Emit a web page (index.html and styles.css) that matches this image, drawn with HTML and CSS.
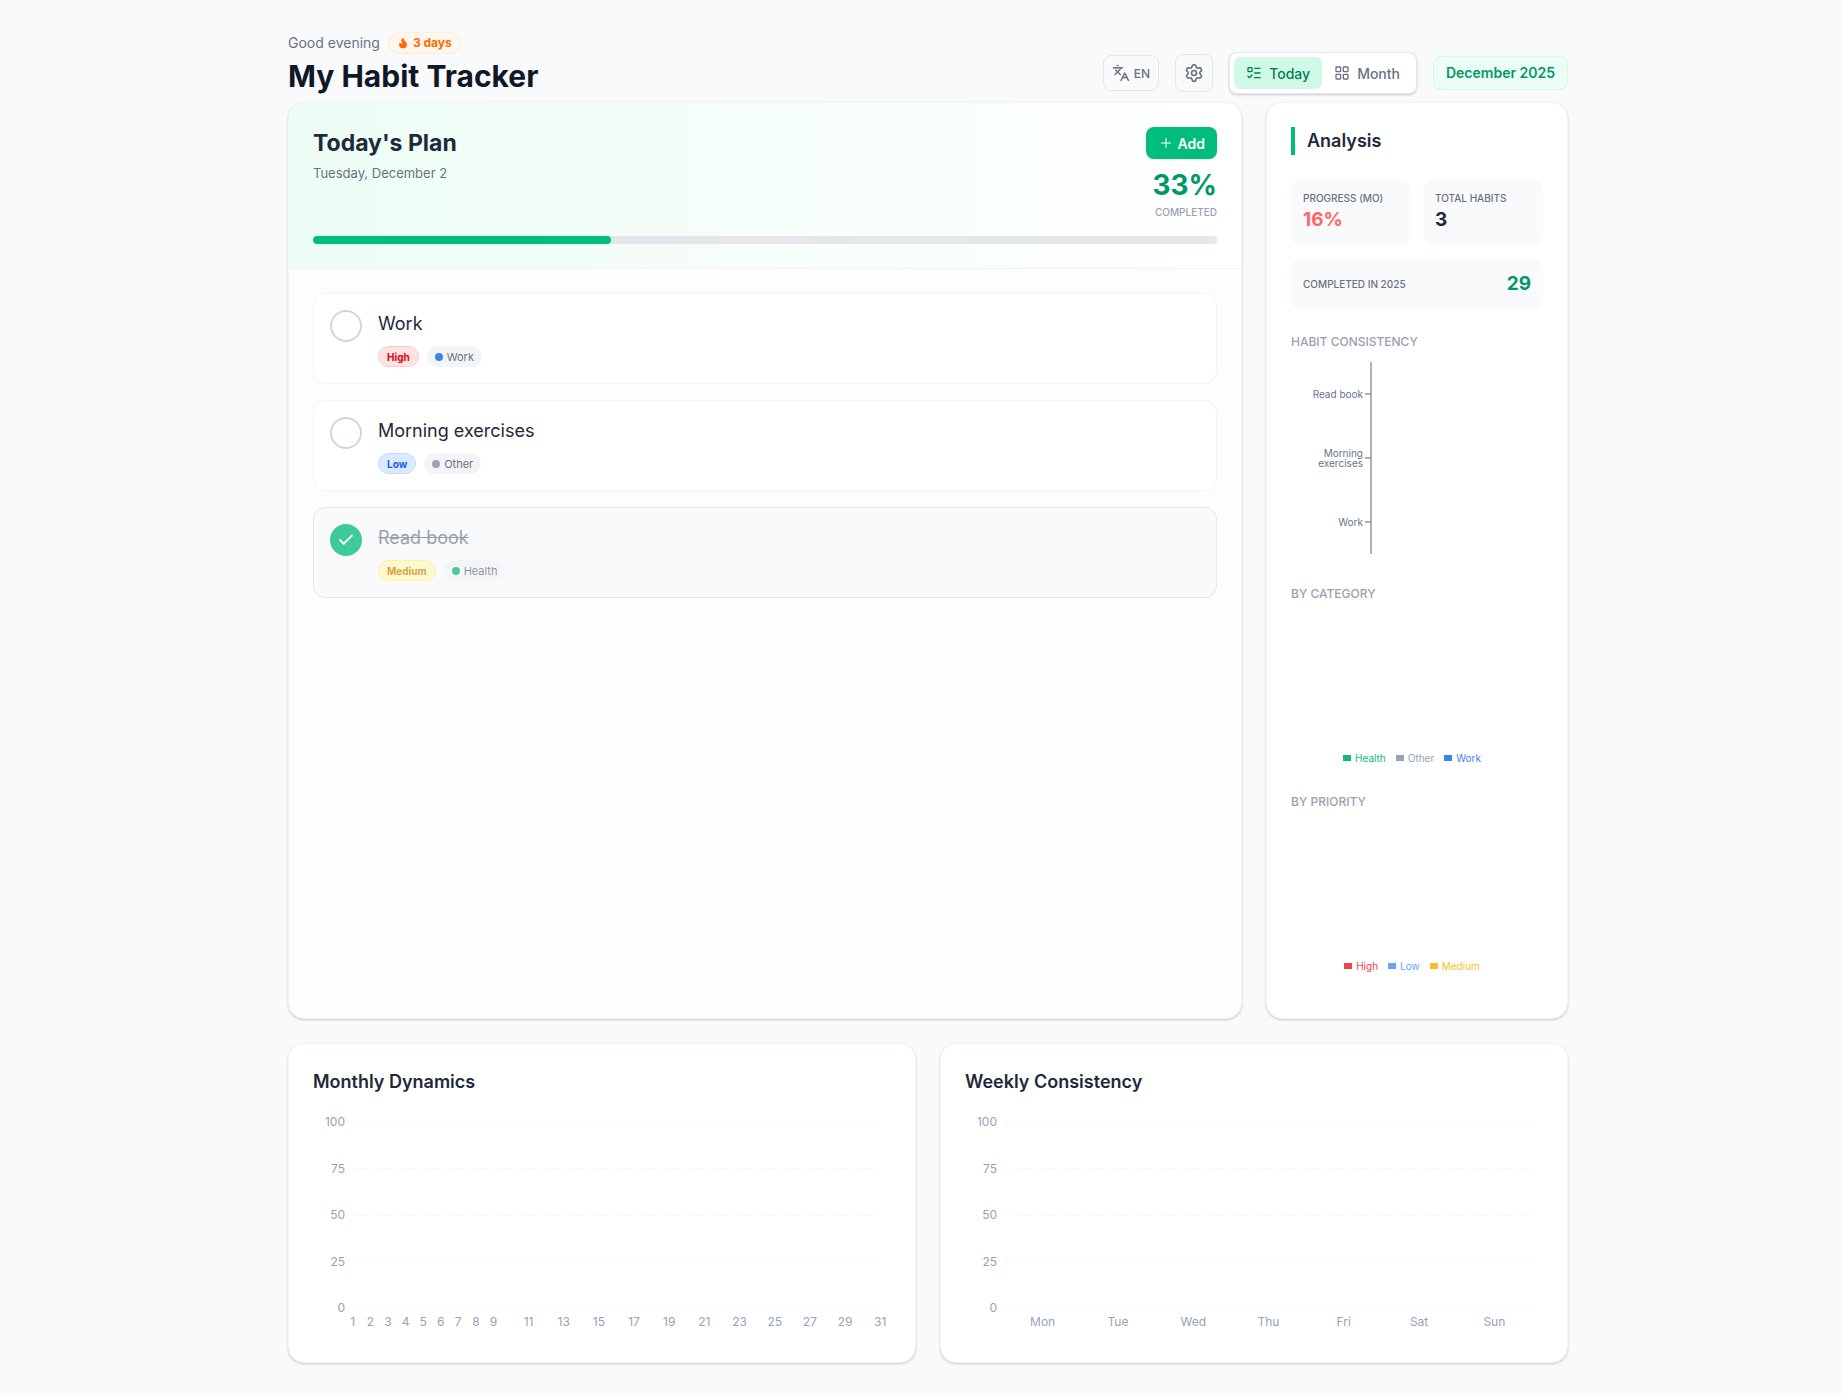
FILE: index.html
```html
<!DOCTYPE html>
<html lang="en">

<head>
    <meta charset="UTF-8">
    <meta name="viewport" content="width=device-width, initial-scale=1.0">
    <title>My Habit Tracker</title>
    <link rel="stylesheet" href="styles.css">
</head>

<body>
    <div class="page">
        <header class="header">
            <div>
                <div class="greeting">
                    <span>Good evening</span>
                    <span class="streak">
                        <svg class="icon flame" width="12" height="12" viewBox="0 0 24 24"><path d="M12 3q1 4 4 6.5t3 5.5a1 1 0 0 1-14 0 5 5 0 0 1 1-3 1 1 0 0 0 5 0c0-2-1.5-3-1.5-5q0-2 2.5-4"/></svg>
                        3 days
                    </span>
                </div>
                <h1>My Habit Tracker</h1>
            </div>
            <div class="toolbar">
                <button class="tool-btn lang-btn">
                    <svg class="icon" width="18" height="18" viewBox="0 0 24 24"><path d="m5 8 6 6"/><path d="m4 14 6-6 2-3"/><path d="M2 5h12"/><path d="M7 2h1"/><path d="m22 22-5-10-5 10"/><path d="M14 18h6"/></svg>
                    EN
                </button>
                <button class="tool-btn settings-btn" aria-label="Settings">
                    <svg class="icon" width="20" height="20" viewBox="0 0 24 24"><path d="M9.671 4.136a2.34 2.34 0 0 1 4.659 0 2.34 2.34 0 0 0 3.319 1.915 2.34 2.34 0 0 1 2.33 4.033 2.34 2.34 0 0 0 0 3.831 2.34 2.34 0 0 1-2.33 4.033 2.34 2.34 0 0 0-3.319 1.915 2.34 2.34 0 0 1-4.659 0 2.34 2.34 0 0 0-3.32-1.915 2.34 2.34 0 0 1-2.33-4.033 2.34 2.34 0 0 0 0-3.831A2.34 2.34 0 0 1 6.35 6.051a2.34 2.34 0 0 0 3.319-1.915"/><circle cx="12" cy="12" r="3"/></svg>
                </button>
                <div class="view-switch">
                    <button class="active">
                        <svg class="icon" width="16" height="16" viewBox="0 0 24 24"><path d="M13 5h8"/><path d="M13 12h8"/><path d="M13 19h8"/><path d="m3 17 2 2 4-4"/><rect x="3" y="4" width="6" height="6" rx="1"/></svg>
                        Today
                    </button>
                    <button>
                        <svg class="icon" width="16" height="16" viewBox="0 0 24 24"><rect x="3" y="3" width="7" height="7" rx="1"/><rect x="14" y="3" width="7" height="7" rx="1"/><rect x="14" y="14" width="7" height="7" rx="1"/><rect x="3" y="14" width="7" height="7" rx="1"/></svg>
                        Month
                    </button>
                </div>
                <div class="current-month">December 2025</div>
            </div>
        </header>

        <main>
            <div class="top-grid">
                <section class="card plan">
                    <div class="plan-header">
                        <div class="plan-top">
                            <div>
                                <h2>Today's Plan</h2>
                                <p class="plan-date">Tuesday, December 2</p>
                            </div>
                            <div class="plan-side">
                                <button class="add-btn">
                                    <svg class="icon plus" width="16" height="16" viewBox="0 0 24 24"><path d="M5 12h14"/><path d="M12 5v14"/></svg>
                                    Add
                                </button>
                                <div class="percent">33%</div>
                                <div class="percent-label">COMPLETED</div>
                            </div>
                        </div>
                        <div class="progress">
                            <div class="progress-fill" style="width: 33%"></div>
                        </div>
                    </div>
                    <ul class="habits">
                        <li class="habit">
                            <input type="checkbox" id="habit-work">
                            <div>
                                <label for="habit-work">Work</label>
                                <div class="tags">
                                    <span class="priority high">High</span>
                                    <span class="category work">Work</span>
                                </div>
                            </div>
                        </li>
                        <li class="habit">
                            <input type="checkbox" id="habit-exercises">
                            <div>
                                <label for="habit-exercises">Morning exercises</label>
                                <div class="tags">
                                    <span class="priority low">Low</span>
                                    <span class="category other">Other</span>
                                </div>
                            </div>
                        </li>
                        <li class="habit done">
                            <input type="checkbox" id="habit-book" checked>
                            <div>
                                <label for="habit-book">Read book</label>
                                <div class="tags">
                                    <span class="priority medium">Medium</span>
                                    <span class="category health">Health</span>
                                </div>
                            </div>
                        </li>
                    </ul>
                </section>

                <aside class="card analysis">
                    <h2>Analysis</h2>
                    <div class="stats">
                        <div class="stat">
                            <div class="stat-label">PROGRESS (MO)</div>
                            <div class="stat-value red">16%</div>
                        </div>
                        <div class="stat">
                            <div class="stat-label">TOTAL HABITS</div>
                            <div class="stat-value">3</div>
                        </div>
                        <div class="stat wide">
                            <div class="stat-label">COMPLETED IN 2025</div>
                            <div class="stat-value green">29</div>
                        </div>
                    </div>

                    <h3>HABIT CONSISTENCY</h3>
                    <svg class="habit-chart" width="100%" height="200">
                        <g class="axis">
                            <path d="M80 0V192"/>
                            <path d="M74 32H80"/>
                            <path d="M74 96H80"/>
                            <path d="M74 160H80"/>
                        </g>
                        <text x="72" y="36">Read book</text>
                        <text x="72" y="95">Morning</text>
                        <text x="72" y="105">exercises</text>
                        <text x="72" y="164">Work</text>
                    </svg>

                    <h3>BY CATEGORY</h3>
                    <div class="pie">
                        <ul class="legend">
                            <li class="c-health">Health</li>
                            <li class="c-other">Other</li>
                            <li class="c-work">Work</li>
                        </ul>
                    </div>

                    <h3>BY PRIORITY</h3>
                    <div class="pie">
                        <ul class="legend">
                            <li class="c-high">High</li>
                            <li class="c-low">Low</li>
                            <li class="c-medium">Medium</li>
                        </ul>
                    </div>
                </aside>
            </div>

            <div class="charts">
                <section class="card chart-card">
                    <h2>Monthly Dynamics</h2>
                    <div class="chart">
                        <div class="y-axis"><span>100</span><span>75</span><span>50</span><span>25</span><span>0</span></div>
                        <div class="plot"><i></i><i></i><i></i><i></i><i></i></div>
                        <div class="x-axis days">
                            <span>1</span><span>2</span><span>3</span><span>4</span><span>5</span><span>6</span><span>7</span><span>8</span><span>9</span><span></span>
                            <span>11</span><span></span><span>13</span><span></span><span>15</span><span></span><span>17</span><span></span><span>19</span><span></span>
                            <span>21</span><span></span><span>23</span><span></span><span>25</span><span></span><span>27</span><span></span><span>29</span><span></span>
                            <span>31</span>
                        </div>
                    </div>
                </section>
                <section class="card chart-card">
                    <h2>Weekly Consistency</h2>
                    <div class="chart">
                        <div class="y-axis"><span>100</span><span>75</span><span>50</span><span>25</span><span>0</span></div>
                        <div class="plot"><i></i><i></i><i></i><i></i><i></i></div>
                        <div class="x-axis">
                            <span>Mon</span><span>Tue</span><span>Wed</span><span>Thu</span><span>Fri</span><span>Sat</span><span>Sun</span>
                        </div>
                    </div>
                </section>
            </div>
        </main>
    </div>
</body>

</html>
```
FILE: styles.css
```css
* {
    box-sizing: border-box;
    margin: 0;
    padding: 0;
}

body {
    font-family: Inter, "Liberation Sans", sans-serif;
    font-size: 14px;
    line-height: 20px;
    color: #1e2939;
    background-color: #f9fafb;
}

button {
    font-family: inherit;
    cursor: pointer;
}

ul {
    list-style: none;
}

.page {
    padding: 32px 24px 32px 39px;
}

.header,
main {
    max-width: 1280px;
    margin: 0 auto;
}

.icon {
    fill: none;
    stroke: currentColor;
    stroke-width: 2;
    stroke-linecap: round;
    stroke-linejoin: round;
    flex-shrink: 0;
}

/* header */
.header {
    display: flex;
    flex-wrap: wrap;
    justify-content: space-between;
    align-items: flex-end;
    gap: 16px;
    margin-bottom: 8px;
}

.greeting {
    display: flex;
    align-items: center;
    gap: 8px;
    margin-bottom: 4px;
    color: #6a7282;
}

.streak {
    display: flex;
    align-items: center;
    gap: 4px;
    height: 22px;
    padding: 0 8px;
    border: 1px solid #ffedd4;
    border-radius: 11px;
    background-color: #fff7ed;
    color: #ff6900;
    font-size: 12px;
    font-weight: 700;
}

.flame {
    fill: currentColor;
}

h1 {
    font-size: 30px;
    line-height: 36px;
    font-weight: 700;
    color: #101828;
}

.toolbar {
    display: flex;
    align-items: center;
    flex-wrap: wrap;
    gap: 16px;
}

.tool-btn {
    display: flex;
    align-items: center;
    justify-content: center;
    gap: 4px;
    border: 1px solid #e5e7eb;
    border-radius: 8px;
    background: none;
    color: #6a7282;
}

.lang-btn {
    height: 36px;
    padding: 0 8px;
    font-size: 12px;
    font-weight: 500;
}

.settings-btn {
    width: 38px;
    height: 38px;
}

.view-switch {
    display: flex;
    padding: 4px;
    border: 1px solid #e5e7eb;
    border-radius: 8px;
    background-color: #fff;
    box-shadow: 0 1px 3px rgba(0, 0, 0, 0.1), 0 1px 2px rgba(0, 0, 0, 0.1);
}

.view-switch button {
    display: flex;
    align-items: center;
    gap: 7px;
    height: 32px;
    padding: 0 12px;
    border: none;
    border-radius: 6px;
    background: none;
    font-size: 14px;
    font-weight: 500;
    color: #6a7282;
}

.view-switch .active {
    background-color: #d0fae5;
    color: #007a55;
}

.current-month {
    padding: 6px 12px;
    border: 1px solid #d0fae5;
    border-radius: 8px;
    background-color: #ecfdf5;
    color: #009966;
    font-weight: 600;
}

/* cards */
.card {
    border: 1px solid #f3f4f6;
    border-radius: 16px;
    background-color: #fff;
    box-shadow: 0 1px 3px rgba(0, 0, 0, 0.1), 0 1px 2px rgba(0, 0, 0, 0.1);
    overflow: hidden;
}

.top-grid {
    display: grid;
    grid-template-columns: repeat(4, 1fr);
    gap: 24px;
    margin-bottom: 24px;
}

/* today's plan */
.plan {
    grid-column: span 3;
    background-color: #fdfdfd;
}

.plan-header {
    padding: 24px;
    border-bottom: 1px solid #f3f4f6;
    background: linear-gradient(to right, #ecfdf5, #fff);
}

.plan-top {
    display: flex;
    justify-content: space-between;
    margin-bottom: 16px;
}

.plan-top h2 {
    font-size: 23px;
    line-height: 32px;
    font-weight: 700;
}

.plan-date {
    margin-top: 4px;
    font-size: 13px;
    color: #6a7282;
}

.plan-side {
    display: flex;
    flex-direction: column;
    align-items: flex-end;
}

.add-btn {
    display: flex;
    align-items: center;
    gap: 4px;
    height: 32px;
    padding: 0 12px;
    margin-bottom: 8px;
    border: none;
    border-radius: 8px;
    background-color: #00bc7d;
    color: #fff;
    font-size: 14px;
    font-weight: 600;
    box-shadow: 0 1px 2px rgba(0, 0, 0, 0.1);
}

.plus {
    stroke-width: 1.5;
}

.percent {
    font-size: 28px;
    line-height: 36px;
    font-weight: 700;
    color: #009966;
}

.percent-label {
    margin-top: 2px;
    font-size: 10px;
    line-height: 15px;
    font-weight: 500;
    color: #99a1af;
}

.progress {
    height: 8px;
    border-radius: 4px;
    background-color: #e5e7eb;
    overflow: hidden;
}

.progress-fill {
    height: 100%;
    border-radius: 4px;
    background-color: #00bc7d;
}

.habits {
    display: flex;
    flex-direction: column;
    gap: 16px;
    padding: 24px;
}

.habit {
    display: flex;
    gap: 16px;
    padding: 16px;
    border: 1px solid #f3f4f6;
    border-radius: 12px;
    background-color: #fff;
}

.habit input {
    appearance: none;
    width: 32px;
    height: 32px;
    border: 2px solid #d1d5dc;
    border-radius: 50%;
    cursor: pointer;
}

.habit input:checked {
    border-color: #00bc7d;
    background: #00bc7d url("data:image/svg+xml,%3Csvg xmlns='http://www.w3.org/2000/svg' width='18' height='18' viewBox='0 0 24 24' fill='none' stroke='white' stroke-width='2.5' stroke-linecap='round' stroke-linejoin='round'%3E%3Cpath d='M20 6 9 17l-5-5'/%3E%3C/svg%3E") center no-repeat;
}

.habit label {
    display: block;
    font-size: 18px;
    line-height: 28px;
}

.habit.done {
    border-color: #e5e7eb;
    background-color: #f9fafb;
}

.habit.done input,
.habit.done .tags {
    opacity: 0.75;
}

.habit.done label {
    color: #99a1af;
    text-decoration: line-through;
}

.tags {
    display: flex;
    gap: 8px;
    margin-top: 8px;
}

.priority,
.category {
    display: flex;
    align-items: center;
    height: 21px;
    padding: 0 8px;
    border-radius: 11px;
}

.priority {
    border: 1px solid;
    font-size: 10px;
    font-weight: 700;
}

.high {
    color: #e7000b;
    background-color: #ffe2e2;
    border-color: #ffc9c9;
}

.low {
    color: #155dfc;
    background-color: #dbeafe;
    border-color: #bedbff;
}

.medium {
    color: #d08700;
    background-color: #fef9c2;
    border-color: #fff085;
}

.category {
    gap: 4px;
    background-color: #f3f4f6;
    color: #6a7282;
    font-size: 11px;
}

.category::before {
    content: "";
    width: 8px;
    height: 8px;
    border-radius: 50%;
}

.work::before {
    background-color: #3b82f6;
}

.other::before {
    background-color: #94a3b8;
}

.health::before {
    background-color: #10b981;
}

/* analysis */
.analysis {
    padding: 24px 24px 40px;
}

.analysis h2 {
    margin-bottom: 24px;
    padding-left: 12px;
    border-left: 4px solid #00bc7d;
    font-size: 18px;
    line-height: 28px;
    font-weight: 600;
}

.stats {
    display: grid;
    grid-template-columns: 1fr 1fr;
    gap: 12px;
    margin-bottom: 24px;
}

.stat {
    padding: 12px;
    border-radius: 12px;
    background-color: #f9fafb;
}

.stat.wide {
    grid-column: span 2;
    display: flex;
    justify-content: space-between;
    align-items: center;
}

.stat-label {
    font-size: 10px;
    line-height: 15px;
    font-weight: 500;
    color: #6a7282;
    white-space: nowrap;
}

.stat-value {
    font-size: 19px;
    line-height: 28px;
    font-weight: 700;
}

.red {
    color: #ff6467;
}

.green {
    color: #009966;
}

.analysis h3 {
    margin-bottom: 12px;
    font-size: 12px;
    line-height: 16px;
    font-weight: 500;
    color: #99a1af;
}

.habit-chart {
    display: block;
    margin-bottom: 24px;
}

.habit-chart .axis {
    stroke: #666;
    stroke-opacity: 0.5;
    stroke-width: 2;
}

.habit-chart text {
    font-size: 10px;
    fill: #64748b;
    text-anchor: end;
}

.pie {
    display: flex;
    align-items: flex-end;
    justify-content: center;
    height: 156px;
    padding: 0 10px 4px 0;
}

.pie + h3 {
    margin-top: 24px;
}

.legend {
    display: flex;
    gap: 10px;
    font-size: 10px;
    line-height: 16px;
}

.legend li {
    display: flex;
    align-items: center;
    gap: 4px;
}

.legend li::before {
    content: "";
    width: 8px;
    height: 6px;
    background-color: currentColor;
}

.c-health {
    color: #10b981;
}

.c-other {
    color: #94a3b8;
}

.c-work {
    color: #3b82f6;
}

.c-high {
    color: #ef4444;
}

.c-low {
    color: #60a5fa;
}

.c-medium {
    color: #fbbf24;
}

/* bottom charts */
.charts {
    display: grid;
    grid-template-columns: 1fr 1fr;
    gap: 24px;
}

.chart-card {
    padding: 24px;
}

.chart-card h2 {
    margin-bottom: 20px;
    font-size: 18px;
    line-height: 28px;
    font-weight: 600;
}

.chart {
    display: grid;
    grid-template-columns: 32px 1fr;
    column-gap: 8px;
    padding-right: 11px;
    font-size: 12px;
    color: #94a3b8;
}

.y-axis,
.plot {
    display: flex;
    flex-direction: column;
    justify-content: space-between;
    height: 198px;
}

.y-axis {
    line-height: 12px;
    text-align: right;
}

.plot {
    padding: 6px 0;
}

.plot i {
    height: 1px;
    background: repeating-linear-gradient(to right, #f1f5f9 0 3px, transparent 3px 6px);
}

.x-axis {
    grid-column: 2;
    display: grid;
    grid-template-columns: repeat(7, 1fr);
    height: 24px;
    line-height: 16px;
    text-align: center;
}

.x-axis.days {
    grid-template-columns: repeat(31, minmax(0, 1fr));
    margin: 0 -9px;
}
```
